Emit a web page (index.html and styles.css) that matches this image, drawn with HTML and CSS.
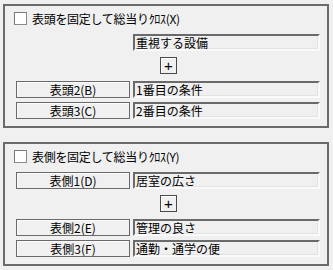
FILE: index.html
```html
<!DOCTYPE html>
<html lang="ja">
<head>
<meta charset="utf-8">
<link rel="stylesheet" href="styles.css">
</head>
<body>
<div class="page">
  <div class="group">
    <div class="check-row"><span class="checkbox"></span><span class="check-label">表頭を固定して総当りｸﾛｽ(X)</span></div>
    <div class="row first"><span class="spacer"></span><span class="field">重視する設備</span></div>
    <div class="plus-row"><span class="plus">+</span></div>
    <div class="row second"><span class="label">表頭2(B)</span><span class="field">1番目の条件</span></div>
    <div class="row third"><span class="label">表頭3(C)</span><span class="field">2番目の条件</span></div>
  </div>
  <div class="group">
    <div class="check-row"><span class="checkbox"></span><span class="check-label">表側を固定して総当りｸﾛｽ(Y)</span></div>
    <div class="row first"><span class="label">表側1(D)</span><span class="field">居室の広さ</span></div>
    <div class="plus-row"><span class="plus">+</span></div>
    <div class="row second"><span class="label">表側2(E)</span><span class="field">管理の良さ</span></div>
    <div class="row third"><span class="label">表側3(F)</span><span class="field">通勤・通学の便</span></div>
  </div>
</div>
</body>
</html>
```
FILE: styles.css
```css
html, body {
  margin: 0;
  background: #f0f0f0;
}
body {
  font-family: "Noto Sans CJK JP", sans-serif;
  font-size: 12px;
  line-height: 13px;
  color: #000;
}
.page {
  padding: 4px 0 0 3px;
}
.group {
  box-sizing: border-box;
  width: 326px;
  height: 124px;
  border: 2px solid #6b6b6b;
}
.group + .group {
  margin-top: 14px;
}
.check-row {
  display: flex;
  align-items: center;
  height: 13px;
  margin-top: 6px;
  padding-left: 9px;
}
.checkbox {
  box-sizing: border-box;
  width: 13px;
  height: 13px;
  background: #fff;
  border: 1px solid #8a8a8a;
  border-top-color: #7a7a7a;
  border-left-color: #7a7a7a;
}
.check-label {
  margin-left: 5px;
  white-space: nowrap;
  letter-spacing: -0.3px;
}
.row {
  display: flex;
  gap: 3px;
  padding-left: 11px;
  height: 17px;
}
.row.first { margin-top: 9px; }
.row.second { margin-top: 7px; }
.row.third { margin-top: 4px; }
.spacer {
  width: 114px;
}
.label {
  box-sizing: border-box;
  width: 114px;
  height: 17px;
  display: flex;
  align-items: center;
  justify-content: center;
  border: 1px solid #6a6a6a;
  box-shadow: inset 1px 1px #fbfbfb;
}
.field {
  box-sizing: border-box;
  width: 187px;
  height: 17px;
  display: flex;
  align-items: center;
  padding-left: 1px;
  border-top: 2px solid #6a6a6a;
  border-left: 2px solid #6a6a6a;
  border-right: 2px solid #fafafa;
  border-bottom: 2px solid #fafafa;
  box-shadow: inset -1px -1px #e3e3e3;
  white-space: nowrap;
}
.plus-row {
  margin-top: 6px;
  padding-left: 155px;
  height: 17px;
}
.plus {
  box-sizing: border-box;
  width: 17px;
  height: 17px;
  display: flex;
  align-items: center;
  justify-content: center;
  border: 1px solid #4a4a4a;
  box-shadow: inset 1px 1px #fff;
  font-family: "Liberation Sans", sans-serif;
  font-size: 15px;
  line-height: 15px;
}
```
